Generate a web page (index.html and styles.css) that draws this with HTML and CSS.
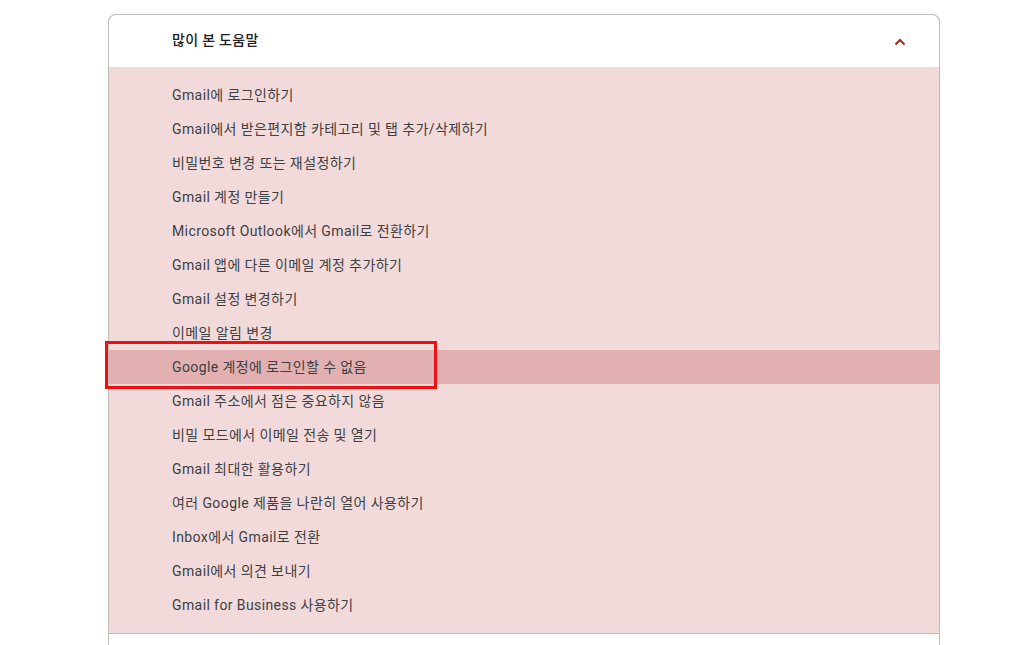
FILE: index.html
```html
<!DOCTYPE html>
<html lang="ko">
<head>
    <meta charset="UTF-8">
    <meta name="viewport" content="width=device-width, initial-scale=1.0">
    <title>많이 본 도움말</title>
    <link rel="stylesheet" href="styles.css">
</head>
<body>
    <div class="card">
        <div class="card-header">
            <span class="card-title">많이 본 도움말</span>
            <svg class="chevron" width="12" height="8" viewBox="0 0 12 8">
                <polyline points="1.5,6.5 6,2 10.5,6.5" fill="none" stroke="#a52714" stroke-width="2"/>
            </svg>
        </div>
        <ul class="help-list">
            <li>Gmail에 로그인하기</li>
            <li>Gmail에서 받은편지함 카테고리 및 탭 추가/삭제하기</li>
            <li>비밀번호 변경 또는 재설정하기</li>
            <li>Gmail 계정 만들기</li>
            <li>Microsoft Outlook에서 Gmail로 전환하기</li>
            <li>Gmail 앱에 다른 이메일 계정 추가하기</li>
            <li>Gmail 설정 변경하기</li>
            <li>이메일 알림 변경</li>
            <li class="active">Google 계정에 로그인할 수 없음<span class="mark"></span></li>
            <li>Gmail 주소에서 점은 중요하지 않음</li>
            <li>비밀 모드에서 이메일 전송 및 열기</li>
            <li>Gmail 최대한 활용하기</li>
            <li>여러 Google 제품을 나란히 열어 사용하기</li>
            <li>Inbox에서 Gmail로 전환</li>
            <li>Gmail에서 의견 보내기</li>
            <li>Gmail for Business 사용하기</li>
        </ul>
        <div class="card-next"></div>
    </div>
</body>
</html>
```

FILE: styles.css
```css
body {
    margin: 0;
    background-color: #fff;
    font-family: Roboto, "Noto Sans CJK KR", Arial, sans-serif;
    color: #3c4043;
    overflow: hidden;
}
.card {
    box-sizing: border-box;
    width: 832px;
    margin: 14px 0 0 108px;
    border: 1px solid #bdbdbd;
    border-bottom: none;
    border-radius: 8px 8px 0 0;
}
.card-header {
    height: 52px;
    display: flex;
    align-items: center;
    justify-content: space-between;
    padding: 0 33px 4px 63px;
    box-sizing: border-box;
}
.card-title {
    font-size: 14px;
    font-weight: 500;
    color: #202124;
    letter-spacing: 0.3px;
}
.chevron {
    margin-top: 6px;
}
.help-list {
    list-style: none;
    margin: 0;
    padding: 11px 0;
    background-color: #f3dada;
    border-bottom: 1px solid #bdbdbd;
}
.help-list li {
    position: relative;
    height: 34px;
    line-height: 34px;
    padding-left: 63px;
    font-size: 14px;
    letter-spacing: 0.4px;
}
.help-list li.active {
    background-color: #e2b0b0;
}
.mark {
    position: absolute;
    left: -4px;
    top: -9px;
    width: 326px;
    height: 42px;
    border: 3px solid #ee1111;
}
.card-next {
    height: 40px;
}
```
